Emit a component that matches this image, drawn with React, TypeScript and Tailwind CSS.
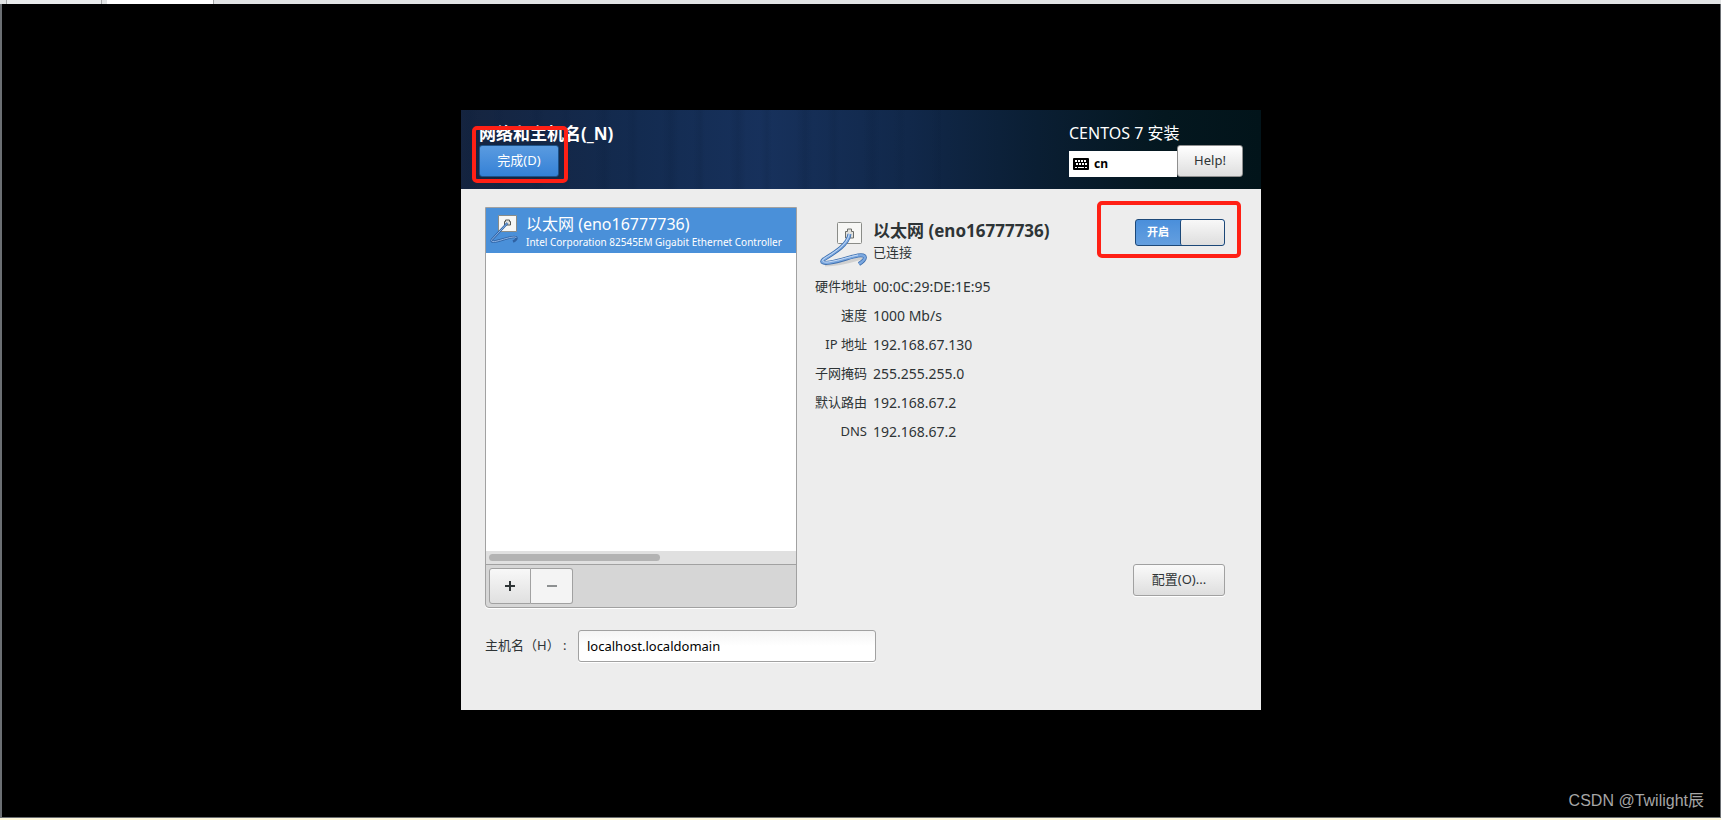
const details = [
    { label: "硬件地址", value: "00:0C:29:DE:1E:95" },
    { label: "速度", value: "1000 Mb/s" },
    { label: "IP 地址", value: "192.168.67.130" },
    { label: "子网掩码", value: "255.255.255.0" },
    { label: "默认路由", value: "192.168.67.2" },
    { label: "DNS", value: "192.168.67.2" },
];

const WiredIcon = () => (
    <svg viewBox="0 0 48 46" className="w-12 h-[46px] ml-1.5 mt-[3px]" fill="none" strokeLinejoin="round" aria-hidden="true">
        <path d="M5 43 C16 43 32 39 42 36" stroke="#000" strokeOpacity="0.12" strokeWidth="3" />
        <rect x="17.5" y="0.5" width="24" height="21" rx="1" fill="#f7f7f5" stroke="#8a8c88" />
        <path d="M25.5 16V9.5h2V7h4v2.5h2V16z" fill="#e2e2de" stroke="#6b6d69" />
        <path
            d="M29.5 12 C28 23 14 31 3.5 37.5 C0 40.5 4 41.5 10 40.5 C20 39 30 35 38 33.5 C47 32 47 37 39 42"
            stroke="#3e6fae"
            strokeWidth="4"
        />
        <path
            d="M29.5 12 C28 23 14 31 3.5 37.5 C0 40.5 4 41.5 10 40.5 C20 39 30 35 38 33.5 C47 32 47 37 39 42"
            stroke="#7ba8e0"
            strokeWidth="2.4"
        />
        <path
            d="M29.2 12 C27.7 22.5 14 30.5 3.5 37 C1 39.5 4 40.7 10 39.7 C20 38.2 30 34.4 38 33"
            stroke="#cfe0f6"
            strokeWidth="0.9"
        />
    </svg>
);

const SmallWiredIcon = () => (
    <svg viewBox="0 0 28 32" className="w-7 h-8 shrink-0" fill="none" strokeLinejoin="round" aria-hidden="true">
        <rect x="8.5" y="3.5" width="18" height="16" fill="#f7f7f5" stroke="#8a8c88" />
        <path d="M14.5 13V9.5h1V8h4v1.5h1V13z" fill="#e2e2de" stroke="#555753" />
        <path d="M17.5 11 L2 27.5 C0 31 6 29.5 11 28 C17 26.2 26 23.5 26.5 26 C26.6 27.2 25 28.6 23 29.6" stroke="#2f62a3" strokeWidth="2.4" />
        <path d="M17.5 11 L2 27.5 C0 31 6 29.5 11 28 C17 26.2 26 23.5 26.5 26" stroke="#8db5e8" strokeWidth="1" />
    </svg>
);

const KeyboardIcon = () => (
    <svg viewBox="0 0 16 12" className="w-4 h-3" aria-hidden="true">
        <rect width="16" height="12" rx="1" fill="#000" />
        <path d="M2 3h12M3 6h11" stroke="#fff" strokeWidth="2" strokeDasharray="2 1" />
        <path d="M2 9.5h2M5 9.5h6M12 9.5h2" stroke="#fff" strokeWidth="1" />
    </svg>
);

const Header = () => (
    <header className="relative flex justify-between py-3 pl-[18px] pr-[18px] bg-[linear-gradient(90deg,#15243f_0%,#132b50_22%,#17315c_38%,#11284a_56%,#0a1e33_72%,#04171f_88%,#02141a_100%)]">
        <div className="absolute inset-y-0 left-0 w-3/5 opacity-20 bg-[repeating-linear-gradient(90deg,transparent_0px,#0b1e3c_9px,transparent_17px,transparent_31px,#0d2140_38px,transparent_43px,transparent_67px)]" />
        <div className="relative flex flex-col items-start">
            <h1 className="text-[17px] leading-[23px] font-bold text-white">网络和主机名(_N)</h1>
            <button className="w-20 h-8 rounded-[3px] border border-[#1c5187] bg-linear-to-b from-[#5a9be0] to-[#3481d6] text-[13px] text-white">
                完成(D)
            </button>
            <div className="absolute -left-[7px] top-1 w-24 h-[57px] rounded-[5px] border-4 border-[#ff2015] pointer-events-none" />
        </div>
        <div className="relative">
            <p className="text-base leading-[23px] text-white">CENTOS 7 安装</p>
            <div className="flex items-end">
                <div className="flex items-center gap-[5px] w-[108px] h-[26px] pl-1 bg-white text-[12px] font-bold text-black">
                    <KeyboardIcon />
                    cn
                </div>
                <button className="w-[66px] h-8 rounded-[3px] border border-[#8f8f8f] bg-linear-to-b from-white to-[#dedede] text-[13px] text-[#2e3436]">
                    Help!
                </button>
            </div>
        </div>
    </header>
);

const DeviceList = () => (
    <section className="flex flex-col w-[312px] h-[401px] shrink-0 rounded-b-[4px] border border-[#a1a1a1] bg-[#d6d6d6] shadow-[0_1px_0_#ffffff] overflow-hidden">
        <ul className="flex-1 bg-white overflow-hidden">
            <li>
                <button className="flex w-full h-[45px] pl-1 pt-1 gap-2 bg-[#4a90d9] text-left text-white whitespace-nowrap">
                    <SmallWiredIcon />
                    <span className="flex flex-col">
                        <span className="text-base leading-6">以太网 (eno16777736)</span>
                        <span className="text-[10px] leading-3">Intel Corporation 82545EM Gigabit Ethernet Controller</span>
                    </span>
                </button>
            </li>
        </ul>
        <div className="h-[13px] px-[3px] pt-[3px] bg-[#e0e0e0]">
            <div className="w-[171px] h-[7px] rounded-full bg-[#b3b3b3]" />
        </div>
        <div className="flex p-[3px] border-t border-[#a1a1a1]">
            <button aria-label="Add" className="flex items-center justify-center w-[42px] h-9 rounded-l-[3px] border border-[#a1a1a1] bg-linear-to-b from-[#f8f8f8] to-[#e0e0e0]">
                <svg viewBox="0 0 10 10" className="w-2.5 h-2.5"><path d="M0 5h10M5 0v10" stroke="#2e3436" strokeWidth="2" /></svg>
            </button>
            <button aria-label="Remove" disabled className="flex items-center justify-center w-[42px] h-9 rounded-r-[3px] border border-l-0 border-[#a1a1a1] bg-[#f4f4f4]">
                <svg viewBox="0 0 10 10" className="w-2.5 h-2.5"><path d="M0 5h10" stroke="#8d9091" strokeWidth="2" /></svg>
            </button>
        </div>
    </section>
);

const DeviceDetails = () => (
    <section className="flex flex-col flex-1 justify-between pb-3 pl-[17px] pr-3">
        <div>
            <div className="flex justify-between pt-3">
                <div className="flex gap-[5px]">
                    <WiredIcon />
                    <div>
                        <h2 className="text-[17px] leading-[23px] font-bold">以太网 (eno16777736)</h2>
                        <p className="leading-5">已连接</p>
                    </div>
                </div>
                <div className="relative h-[27px]">
                    <label className="flex w-[90px] h-[27px] rounded-[3px] border border-[#1c4878] bg-linear-to-b from-[#4a8fdb] to-[#649fdf] overflow-hidden">
                        <input type="checkbox" role="switch" defaultChecked className="sr-only" />
                        <span className="flex-1 text-center text-[11px] leading-6 font-bold text-white">开启</span>
                        <span className="w-[44px] border-l border-[#1c4878] rounded-[2px] bg-linear-to-b from-[#f8f8f8] to-[#dedede]" />
                    </label>
                    <div className="absolute -left-[38px] -top-[18px] w-36 h-[57px] rounded-[5px] border-4 border-[#ff2015] pointer-events-none" />
                </div>
            </div>
            <dl className="grid grid-cols-[53px_1fr] gap-x-1.5 mt-1">
                {details.map((row) => (
                    <div key={row.label} className="contents">
                        <dt className="leading-[29px] text-right whitespace-nowrap">{row.label}</dt>
                        <dd className="text-sm leading-[29px]">{row.value}</dd>
                    </div>
                ))}
            </dl>
        </div>
        <button className="self-end w-[92px] h-8 rounded-[3px] border border-[#a1a1a1] bg-linear-to-b from-[#fafafa] to-[#dedede] shadow-[0_1px_0_#ffffff]">
            配置(O)...
        </button>
    </section>
);

const App = () => {
    return (
        <div className="flex flex-col min-h-screen bg-black text-[13px] text-[#2e3436] font-['Noto_Sans','Noto_Sans_CJK_SC',sans-serif]">
            <div className="flex h-1 pl-1.5 bg-[#e1e3e4]">
                <div className="w-24 border-x border-[#a5a7a8] bg-[#e9ebec]" />
                <div className="w-[107px] ml-[5px] border-r border-[#a5a7a8] bg-white" />
            </div>
            <div className="flex flex-col flex-1 border-l-2 border-r border-b border-[#6b6f73]">
                <main className="w-full max-w-[800px] mx-auto mt-[106px] bg-[#ededed]">
                    <Header />
                    <div className="px-6 pt-[18px] pb-12">
                        <div className="flex">
                            <DeviceList />
                            <DeviceDetails />
                        </div>
                        <div className="flex items-center gap-2 mt-[22px]">
                            <label htmlFor="hostname" className="w-[85px] whitespace-nowrap">主机名（H） :</label>
                            <input
                                id="hostname"
                                defaultValue="localhost.localdomain"
                                className="w-[298px] h-8 px-2 rounded-[3px] border border-[#a1a1a1] bg-linear-to-b from-[#f4f4f4] to-white to-50% text-black shadow-[0_1px_0_#ffffff]"
                            />
                        </div>
                    </div>
                </main>
                <p className="mt-auto pr-4 pb-1 text-right text-base text-[#a6a6a6] font-['Liberation_Sans','Noto_Sans_CJK_SC',sans-serif]">
                    CSDN @Twilight辰
                </p>
            </div>
            <div className="h-0.5 bg-[#fdf8dc]" />
        </div>
    );
};

export default App;
